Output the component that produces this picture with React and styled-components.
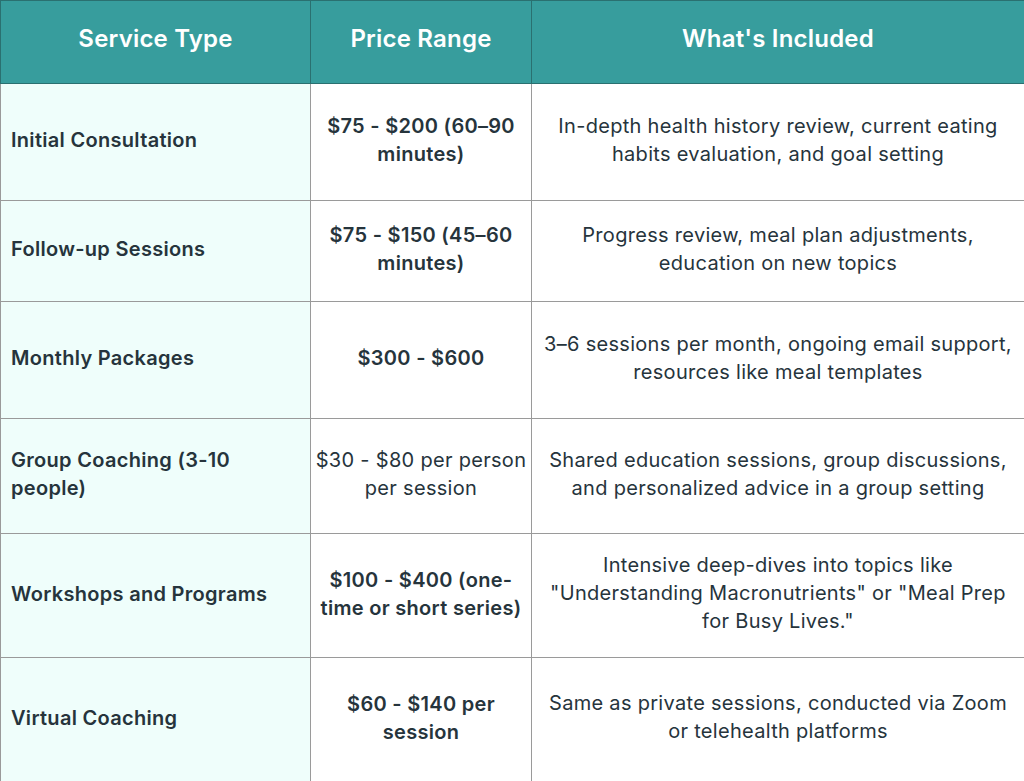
import styled, { createGlobalStyle } from "styled-components";

const GlobalStyle = createGlobalStyle`
  html, body {
    margin: 0;
    padding: 0;
    background: #ffffff;
  }
  body {
    font-family: "Inter", "Noto Sans", sans-serif;
    color: #26343c;
  }
`;

const rows = [
  {
    service: ["Initial Consultation"],
    price: ["$75 - $200 (60–90", "minutes)"],
    included: ["In-depth health history review, current eating", "habits evaluation, and goal setting"],
    height: 117,
  },
  {
    service: ["Follow-up Sessions"],
    price: ["$75 - $150 (45–60", "minutes)"],
    included: ["Progress review, meal plan adjustments,", "education on new topics"],
    height: 101,
  },
  {
    service: ["Monthly Packages"],
    price: ["$300 - $600"],
    included: ["3–6 sessions per month, ongoing email support,", "resources like meal templates"],
    height: 117,
  },
  {
    service: ["Group Coaching (3-10", "people)"],
    price: ["$30 - $80 per person", "per session"],
    priceLight: true,
    included: ["Shared education sessions, group discussions,", "and personalized advice in a group setting"],
    height: 115,
  },
  {
    service: ["Workshops and Programs"],
    price: ["$100 - $400 (one-", "time or short series)"],
    included: [
      "Intensive deep-dives into topics like",
      "\"Understanding Macronutrients\" or \"Meal Prep",
      "for Busy Lives.\"",
    ],
    height: 124,
  },
  {
    service: ["Virtual Coaching"],
    price: ["$60 - $140 per", "session"],
    included: ["Same as private sessions, conducted via Zoom", "or telehealth platforms"],
    height: 124,
  },
];

const Lines = ({ lines }) =>
  lines.map((l, i) => (
    <span key={i}>
      {l}
      {i < lines.length - 1 && <br />}
    </span>
  ));

export default function App() {
  return (
    <>
      <GlobalStyle />
      <Table>
        <colgroup>
          <col style={{ width: 310 }} />
          <col style={{ width: 221 }} />
          <col style={{ width: 493 }} />
        </colgroup>
        <thead>
          <tr>
            <HeadCell>Service Type</HeadCell>
            <HeadCell>Price Range</HeadCell>
            <HeadCell>What's Included</HeadCell>
          </tr>
        </thead>
        <tbody>
          {rows.map((r, i) => (
            <Row key={i} $h={r.height}>
              <ServiceCell>
                <Lines lines={r.service} />
              </ServiceCell>
              <PriceCell $light={r.priceLight}>
                <Lines lines={r.price} />
              </PriceCell>
              <IncludedCell>
                <Lines lines={r.included} />
              </IncludedCell>
            </Row>
          ))}
        </tbody>
      </Table>
    </>
  );
}

const Table = styled.table`
  width: 1024px;
  border-collapse: collapse;
  table-layout: fixed;
  font-size: 20px;
  line-height: 28px;
  letter-spacing: 0.3px;
`;

const HeadCell = styled.th`
  height: 83px;
  padding: 0 4px 6px;
  background: #379d9d;
  color: #ffffff;
  font-size: 24px;
  font-weight: 600;
  letter-spacing: 0.2px;
  text-align: center;
  border: 1px solid #2a7070;
  box-sizing: border-box;
`;

const Row = styled.tr`
  height: ${({ $h }) => $h}px;
`;

const Cell = styled.td`
  border: 1px solid #9a9a9a;
  vertical-align: middle;
  box-sizing: border-box;
  color: #26343c;
`;

const ServiceCell = styled(Cell)`
  background: #effefb;
  padding: 0 8px 4px 10px;
  text-align: left;
  font-weight: 600;
`;

const PriceCell = styled(Cell)`
  padding: 0 2px 4px;
  text-align: center;
  font-weight: ${({ $light }) => ($light ? 400 : 600)};
`;

const IncludedCell = styled(Cell)`
  padding: 0 4px 5px;
  text-align: center;
  font-weight: 400;
`;
